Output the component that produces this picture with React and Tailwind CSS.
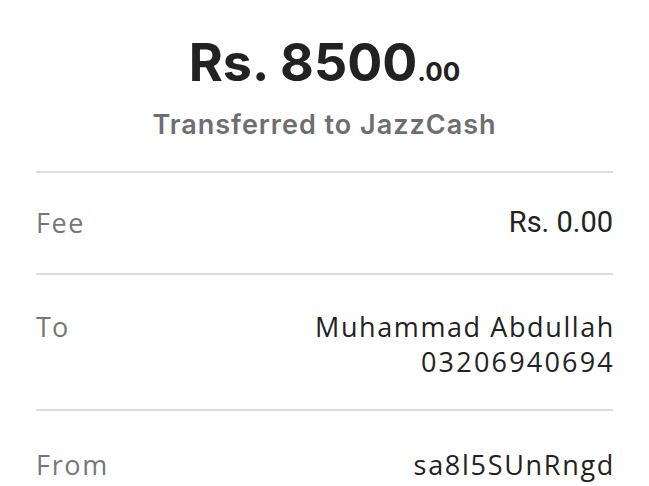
export default function App() {
  return (
    <div className="w-[649px] h-[486px] bg-white overflow-hidden text-[#222]" style={{ fontFamily: 'Inter, "Open Sans", sans-serif' }}>
      <div className="h-[171px] flex flex-col items-center pt-[32px]">
        <div className="text-[52px] leading-[62px] font-bold text-[#222]">
          Rs. 8500<span className="text-[26px]">.00</span>
        </div>
        <div className="mt-[5px] text-[27px] leading-[34px] font-semibold text-[#6e6e6e] tracking-[1px]">Transferred to JazzCash</div>
      </div>
      <div className="mx-[36px]">
        <div className="h-[104px] border-t-2 border-b-2 border-[#dedede] flex items-center justify-between">
          <span className="text-[27px] text-[#777] tracking-[1.6px]" style={{ fontFamily: '"Open Sans", sans-serif' }}>Fee</span>
          <span className="text-[29px] text-[#222]" style={{ fontFamily: 'Roboto, sans-serif' }}>Rs. 0.00</span>
        </div>
        <div className="h-[136px] border-b-2 border-[#dedede] flex justify-between pt-[34px]" style={{ fontFamily: '"Open Sans", sans-serif' }}>
          <span className="text-[27px] leading-[35px] text-[#777] tracking-[1.2px]">To</span>
          <div className="text-right text-[27px] leading-[35px] -mr-[2px]">
            <div className="tracking-[1.6px]">Muhammad Abdullah</div>
            <div className="tracking-[2.2px]">03206940694</div>
          </div>
        </div>
        <div className="flex justify-between pt-[36px]" style={{ fontFamily: '"Open Sans", sans-serif' }}>
          <span className="text-[27px] leading-[35px] text-[#777] tracking-[1.7px]">From</span>
          <span className="text-[27px] leading-[35px] tracking-[1.7px] -mr-[2px]">sa8l5SUnRngd</span>
        </div>
      </div>
    </div>
  );
}
